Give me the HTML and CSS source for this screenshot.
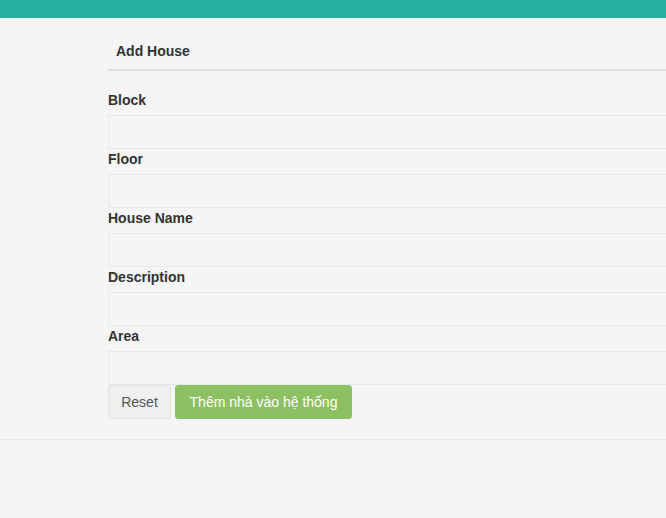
FILE: index.html
```html
<!DOCTYPE html>
<html>
<head>
<meta charset="utf-8">
<link rel="stylesheet" href="styles.css">
</head>
<body>
<div class="topbar"></div>
<div class="main">
  <div class="panel">
    <h3 class="title">Add House</h3>
    <form class="form">
      <label class="label">Block</label>
      <input class="input" type="text">
      <label class="label">Floor</label>
      <input class="input" type="text">
      <label class="label">House Name</label>
      <input class="input" type="text">
      <label class="label">Description</label>
      <input class="input" type="text">
      <label class="label">Area</label>
      <input class="input" type="text">
      <div class="actions">
        <button type="reset" class="btn btn-default">Reset</button>
        <button type="button" class="btn btn-success">Thêm nhà vào hệ thống</button>
      </div>
    </form>
  </div>
</div>
<div class="footer-line"></div>
</body>
</html>
```
FILE: styles.css
```css
html, body {
  margin: 0;
  padding: 0;
  background: #f5f5f5;
  font-family: "Liberation Sans", Arial, sans-serif;
  font-size: 14px;
  line-height: 20px;
  color: #333;
  overflow: hidden;
}
.topbar {
  height: 18px;
  background: #26ae9f;
}
.main {
  padding: 12px 0 20px 108px;
}
.panel {
  width: 640px;
}
.title {
  margin: 0;
  padding: 11px 8px 8px;
  font-size: 14px;
  font-weight: bold;
  line-height: 20px;
  border-bottom: 2px solid #dedede;
}
.form {
  display: flex;
  flex-direction: column;
  padding-top: 19px;
}
.label {
  display: block;
  font-weight: bold;
  line-height: 20px;
  margin-bottom: 5px;
  color: #333;
}
.input {
  box-sizing: border-box;
  height: 34px;
  width: 100%;
  margin: 0;
  border: 1px solid #e8e8e8;
  background: #f5f5f5;
  outline: none;
  padding: 6px 12px;
  font: inherit;
}
.actions {
  display: flex;
  gap: 4px;
}
.btn {
  box-sizing: border-box;
  height: 34px;
  padding: 6px 12px;
  font-family: "Liberation Sans", Arial, sans-serif;
  font-size: 14px;
  line-height: 20px;
  border-radius: 3px;
  border: 1px solid transparent;
  cursor: pointer;
}
.btn-default {
  width: 63px;
  background: #efefef;
  border-color: #e2e2e2;
  color: #555;
}
.btn-success {
  width: 177px;
  background: #8cc063;
  border-color: #8cc063;
  color: #fff;
}
.footer-line {
  border-top: 1px solid #e6e6e6;
}
```
